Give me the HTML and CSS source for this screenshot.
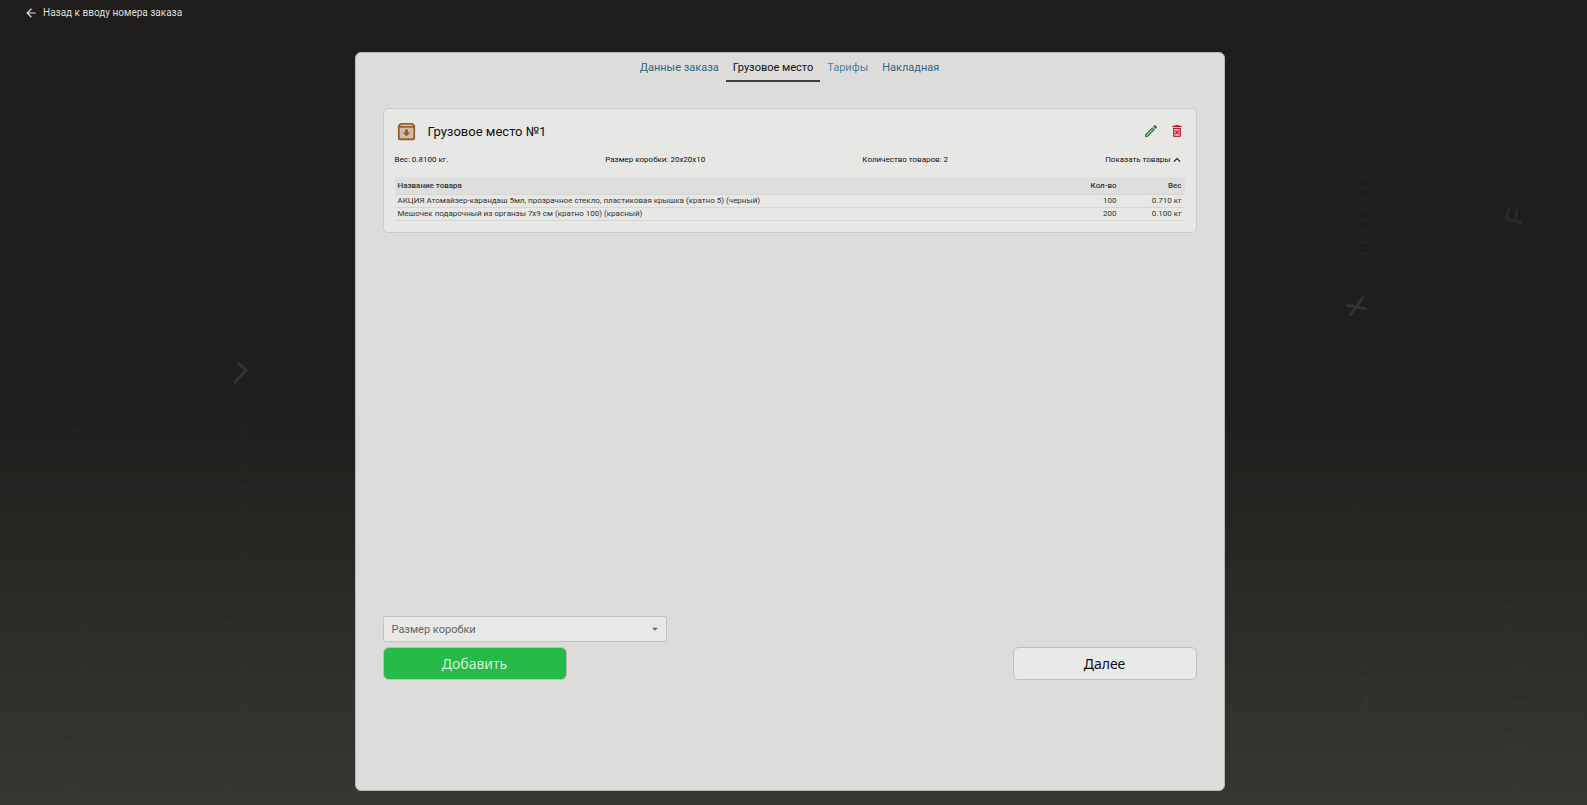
FILE: index.html
```html
<!DOCTYPE html>
<html lang="ru">
<head>
<meta charset="utf-8">
<title>Грузовое место</title>
<link rel="stylesheet" href="styles.css">
</head>
<body>
<svg class="backdrop" viewBox="0 0 1587 805" preserveAspectRatio="none" aria-hidden="true">
  <g class="rain">
    <path d="M72 100V168M80 112V200M74 290V325M87 290V325M76 352V450M75 560V610M87 590V685M70 730V795M79 718V800M88 710V765"/>
    <path d="M229 130V240M238 110V205M246 145V240M230 257V305M244 257V335M243 352V410M244 430V555M229 610V635M241 620V670M231 718V800M244 710V735"/>
    <path d="M1357 90V165M1348 135V240M1361 175V260M1366 175V270M1353 498V525M1365 600V710M1352 720V780M1367 695V770"/>
    <path d="M1515 102V130M1508 125V170M1519 150V200M1509 265V350M1524 260V280M1522 500V530M1509 605V640M1509 678V765M1518 668V800M1526 668V765"/>
  </g>
  <path class="stroke" d="M238 363L246 370L234 383"/>
  <path class="stroke" d="M1346 305L1367 309M1363 297L1350 316"/>
  <path class="stroke faint" d="M1509 209L1506 219L1522 223M1517 209L1515 221"/>
</svg>

<header class="topbar">
  <a class="back" href="#">
    <svg class="back-icon" viewBox="0 0 24 24" aria-hidden="true"><path d="M20 11H7.83l5.59-5.59L12 4l-8 8 8 8 1.41-1.41L7.83 13H20v-2z"/></svg>
    Назад к вводу номера заказа
  </a>
</header>

<main class="panel">
  <nav class="tabs">
    <a class="tab" href="#">Данные заказа</a>
    <a class="tab active" href="#" aria-current="page">Грузовое место</a>
    <a class="tab light" href="#">Тарифы</a>
    <a class="tab" href="#">Накладная</a>
  </nav>

  <section class="place">
    <div class="place-head">
      <svg class="box-icon" viewBox="0 0 24 24" aria-hidden="true"><path opacity=".3" d="M5 8h14v11H5z"/><path d="M20.54 5.23l-1.39-1.68C18.88 3.21 18.47 3 18 3H6c-.47 0-.88.21-1.16.55L3.46 5.23C3.17 5.57 3 6.02 3 6.5V19c0 1.1.9 2 2 2h14c1.1 0 2-.9 2-2V6.5c0-.48-.17-.93-.46-1.27zM6.24 5h11.52l.83 1H5.42l.82-1zM5 19V8h14v11H5zm8.45-9h-2.9v3H8l4 4 4-4h-2.55z"/></svg>
      <h1 class="place-title">Грузовое место №1</h1>
      <button class="icon-button edit" type="button" aria-label="Изменить">
        <svg viewBox="0 0 24 24" aria-hidden="true"><path opacity=".3" d="M5 18.08V19h.92l9.06-9.06-.92-.92z"/><path d="M20.71 7.04c.39-.39.39-1.02 0-1.41l-2.34-2.34c-.2-.2-.45-.29-.71-.29s-.51.1-.7.29l-1.83 1.83 3.75 3.75 1.83-1.83zM3 17.25V21h3.75L17.81 9.94l-3.75-3.75L3 17.25zM5.92 19H5v-.92l9.06-9.06.92.92L5.92 19z"/></svg>
      </button>
      <button class="icon-button remove" type="button" aria-label="Удалить">
        <svg viewBox="0 0 24 24" aria-hidden="true"><path opacity=".15" d="M8 9h8v10H8z"/><path d="M14.12 10.47L12 12.59l-2.13-2.12-1.41 1.41L10.59 14l-2.12 2.12 1.41 1.41L12 15.41l2.12 2.12 1.41-1.41L13.41 14l2.12-2.12zM15.5 4l-1-1h-5l-1 1H5v2h14V4zM6 19c0 1.1.9 2 2 2h8c1.1 0 2-.9 2-2V7H6v12zM8 9h8v10H8V9z"/></svg>
      </button>
    </div>

    <div class="facts">
      <span>Вес: 0.8100 кг.</span>
      <span>Размер коробки: 20х20х10</span>
      <span>Количество товаров: 2</span>
      <button class="toggle" type="button" aria-expanded="true">Показать товары
        <svg viewBox="0 0 24 24" aria-hidden="true"><path d="M12 8l-6 6 1.41 1.41L12 10.83l4.59 4.58L18 14z"/></svg>
      </button>
    </div>

    <table class="goods">
      <thead>
        <tr><th>Название товара</th><th class="qty">Кол-во</th><th class="weight">Вес</th></tr>
      </thead>
      <tbody>
        <tr><td>АКЦИЯ Атомайзер-карандаш 5мл, прозрачное стекло, пластиковая крышка (кратно 5) (черный)</td><td class="qty">100</td><td class="weight">0.710 кг</td></tr>
        <tr><td>Мешочек подарочный из органзы 7х9 см (кратно 100) (красный)</td><td class="qty">200</td><td class="weight">0.100 кг</td></tr>
      </tbody>
    </table>
  </section>

  <footer class="controls">
    <div class="select-wrap">
      <select class="size-select" aria-label="Размер коробки">
        <option>Размер коробки</option>
      </select>
      <svg class="caret" viewBox="0 0 24 24" aria-hidden="true"><path d="M7 10l5 5 5-5z"/></svg>
    </div>
    <div class="actions">
      <button class="button add" type="button">Добавить</button>
      <button class="button next" type="button">Далее</button>
    </div>
  </footer>
</main>
</body>
</html>
```
FILE: styles.css
```css
* {
  box-sizing: border-box;
}

body {
  margin: 0;
  min-height: 100vh;
  padding: 0 8px 14px 0;
  display: flex;
  flex-direction: column;
  background: linear-gradient(#1f1e1c 0, #1f1e1c 50%, #373633 100%);
  color: #111;
  font-family: Roboto, "Noto Sans", sans-serif;
  font-size: 8px;
}

button,
select {
  font: inherit;
  color: inherit;
}

a {
  text-decoration: none;
}

svg {
  display: block;
  fill: currentColor;
}

.backdrop {
  position: absolute;
  inset: 0;
  z-index: -1;
  width: 100%;
  height: 100%;
  fill: none;
}

.rain {
  stroke: #fff;
  stroke-opacity: 0.02;
  stroke-width: 4;
  stroke-dasharray: 3 8;
}

.stroke {
  stroke: #333230;
  stroke-width: 3;
}

.faint {
  stroke: #2b2a28;
}

.topbar {
  display: flex;
  height: 52px;
  padding: 4px 24px;
  align-items: flex-start;
}

.back {
  display: flex;
  align-items: center;
  gap: 5px;
  line-height: 18px;
  font-size: 10px;
  color: #dededc;
}

.back-icon {
  width: 14px;
  height: 14px;
}

.panel {
  flex: 1;
  display: flex;
  flex-direction: column;
  width: 100%;
  max-width: 870px;
  margin: 0 auto;
  padding: 0 27px 110px;
  border: 1px solid #b9b8b6;
  border-radius: 6px;
  background: #dddcda;
}

.tabs {
  display: flex;
  justify-content: center;
  margin-bottom: 26px;
}

.tab {
  padding: 2px 7px 0;
  line-height: 25px;
  font-size: 11px;
  color: #2f6680;
  border-bottom: 2px solid transparent;
}

.tab.light {
  color: #4a84a3;
}

.tab.active {
  color: #111;
  border-bottom-color: #3d3d3d;
}

.place {
  padding: 10px 11px 11px;
  border: 1px solid #cacac8;
  border-radius: 5px;
  background: #e7e7e5;
}

.place-head {
  display: flex;
  align-items: center;
  height: 24px;
}

.box-icon {
  width: 23px;
  height: 23px;
  color: #965e23;
}

.place-title {
  flex: 1;
  margin: 0 0 0 10px;
  font-size: 13px;
  font-weight: 400;
}

.icon-button {
  padding: 0;
  border: 0;
  background: none;
}

.icon-button svg {
  width: 16px;
  height: 16px;
}

.edit {
  margin-right: 10px;
  color: #2f7d36;
}

.remove {
  color: #c9203a;
}

.facts {
  display: flex;
  justify-content: space-between;
  margin: 11px 0;
  line-height: 12px;
}

.toggle {
  display: flex;
  align-items: center;
  height: 12px;
  padding: 0;
  border: 0;
  background: none;
}

.toggle svg {
  width: 14px;
  height: 14px;
}

.goods {
  width: 100%;
  border-collapse: collapse;
  line-height: 12px;
}

.goods th,
.goods td {
  padding: 0 3px;
  text-align: left;
  font-weight: 400;
  color: #333;
  border-bottom: 1px solid #d6d6d4;
}

.goods th {
  padding: 3px 3px 2px;
  font-weight: 500;
  background: #dededc;
}

.goods .qty,
.goods .weight {
  width: 65px;
  text-align: right;
}

.controls {
  margin-top: auto;
}

.select-wrap {
  position: relative;
  width: 35%;
  margin-bottom: 5px;
}

.size-select {
  appearance: none;
  width: 100%;
  height: 26px;
  padding: 0 8px;
  border: 1px solid #c3c3c1;
  border-radius: 2px;
  background: #e8e8e6;
  color: #666;
  font-size: 11px;
}

.caret {
  position: absolute;
  right: 5px;
  top: 6px;
  width: 14px;
  height: 14px;
  color: #666;
  pointer-events: none;
}

.actions {
  display: flex;
  justify-content: space-between;
}

.button {
  width: 184px;
  height: 33px;
  padding: 0;
  border: 1px solid #bdbdbb;
  border-radius: 6px;
  font-family: "Noto Sans", sans-serif;
  font-size: 14px;
}

.add {
  background: #26ba48;
  color: #d5eed9;
}

.next {
  background: #e9e9e8;
}
```
